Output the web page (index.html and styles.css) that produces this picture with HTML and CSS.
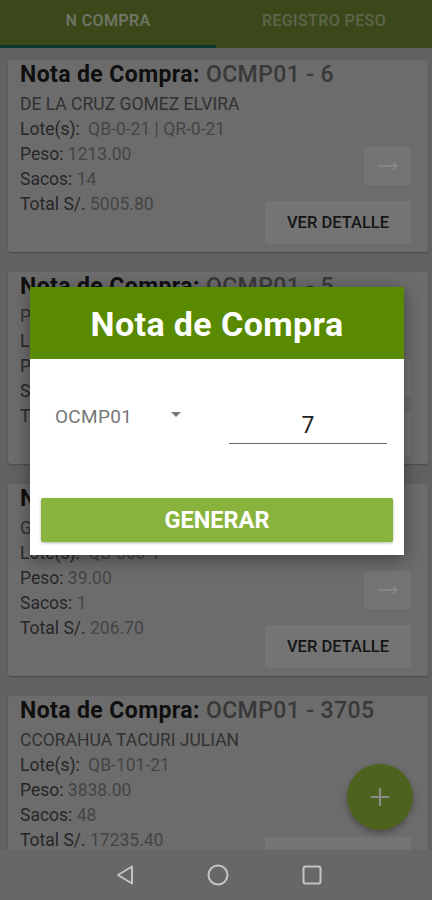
FILE: index.html
```html
<!DOCTYPE html>
<html lang="es">
<head>
<meta charset="UTF-8">
<meta name="viewport" content="width=device-width, initial-scale=1.0">
<title>Nota de Compra</title>
<link rel="stylesheet" href="styles.css">
</head>
<body>
<div class="screen">
    <header class="tabs">
        <div class="tab active">N COMPRA</div>
        <div class="tab">REGISTRO PESO</div>
    </header>

    <main class="list">
        <div class="card">
            <div class="title">Nota de Compra: <span>OCMP01 - 6</span></div>
            <div class="info">
                <div class="name">DE LA CRUZ GOMEZ ELVIRA</div>
                <div class="line">Lote(s): <span class="lots">QB-0-21 | QR-0-21</span></div>
                <div class="line">Peso: <span>1213.00</span></div>
                <div class="line">Sacos: <span>14</span></div>
                <div class="line">Total S/. <span>5005.80</span></div>
            </div>
            <div class="actions">
                <button class="arrow"><svg width="22" height="10" viewBox="0 0 22 10"><path d="M1 5h19M16 1.5 20 5l-4 3.5" fill="none" stroke="#fff" stroke-width="1.4"/></svg></button>
                <button class="detail">VER DETALLE</button>
            </div>
        </div>

        <div class="card">
            <div class="title">Nota de Compra: <span>OCMP01 - 5</span></div>
            <div class="info">
                <div class="name">PALOMINO HUAMAN ROSA</div>
                <div class="line">Lote(s): <span class="lots">QB-2-21</span></div>
                <div class="line">Peso: <span>842.00</span></div>
                <div class="line">Sacos: <span>10</span></div>
                <div class="line">Total S/. <span>3486.30</span></div>
            </div>
            <div class="actions">
                <button class="arrow"><svg width="22" height="10" viewBox="0 0 22 10"><path d="M1 5h19M16 1.5 20 5l-4 3.5" fill="none" stroke="#fff" stroke-width="1.4"/></svg></button>
                <button class="detail">VER DETALLE</button>
            </div>
        </div>

        <div class="card">
            <div class="title">Nota de Compra: <span>OCMP01 - 4</span></div>
            <div class="info">
                <div class="name">GUTIERREZ QUISPE MARIO</div>
                <div class="line">Lote(s): <span class="lots">QB-368-1</span></div>
                <div class="line">Peso: <span>39.00</span></div>
                <div class="line">Sacos: <span>1</span></div>
                <div class="line">Total S/. <span>206.70</span></div>
            </div>
            <div class="actions">
                <button class="arrow"><svg width="22" height="10" viewBox="0 0 22 10"><path d="M1 5h19M16 1.5 20 5l-4 3.5" fill="none" stroke="#fff" stroke-width="1.4"/></svg></button>
                <button class="detail">VER DETALLE</button>
            </div>
        </div>

        <div class="card">
            <div class="title">Nota de Compra: <span>OCMP01 - 3705</span></div>
            <div class="info">
                <div class="name">CCORAHUA TACURI JULIAN</div>
                <div class="line">Lote(s): <span class="lots">QB-101-21</span></div>
                <div class="line">Peso: <span>3838.00</span></div>
                <div class="line">Sacos: <span>48</span></div>
                <div class="line">Total S/. <span>17235.40</span></div>
            </div>
            <div class="actions">
                <button class="arrow"><svg width="22" height="10" viewBox="0 0 22 10"><path d="M1 5h19M16 1.5 20 5l-4 3.5" fill="none" stroke="#fff" stroke-width="1.4"/></svg></button>
                <button class="detail">VER DETALLE</button>
            </div>
        </div>
    </main>

    <button class="fab">
        <svg width="22" height="22" viewBox="0 0 22 22"><path d="M11 2v18M2 11h18" stroke="#fff" stroke-width="2.2" fill="none"/></svg>
    </button>

    <div class="scrim"></div>

    <div class="dialog">
        <div class="dialog-header">Nota de Compra</div>
        <div class="dialog-body">
            <div class="dialog-row">
                <div class="spinner">OCMP01 <span class="caret"></span></div>
                <div class="number">7</div>
            </div>
            <button class="generate">GENERAR</button>
        </div>
    </div>

    <nav class="sysnav">
        <svg width="20" height="22" viewBox="0 0 20 22"><path d="M17 2.5 L3 11 L17 19.5 Z" fill="none" stroke="#c4c4c4" stroke-width="2" stroke-linejoin="round"/></svg>
        <svg width="22" height="22" viewBox="0 0 22 22"><circle cx="11" cy="11" r="9.5" fill="none" stroke="#c4c4c4" stroke-width="2"/></svg>
        <svg width="22" height="22" viewBox="0 0 22 22"><rect x="2.5" y="2.5" width="17" height="17" rx="2" fill="none" stroke="#c4c4c4" stroke-width="2"/></svg>
    </nav>
</div>
</body>
</html>
```

FILE: styles.css
```css
body, html {
    margin: 0;
    padding: 0;
}
body {
    font-family: Roboto, "Noto Sans", sans-serif;
}
.screen {
    position: relative;
    width: 432px;
    height: 900px;
    display: flex;
    flex-direction: column;
    overflow: hidden;
    background-color: #b4b4b4;
}

/* tabs */
.tabs {
    display: flex;
    height: 48px;
    background-color: #6c8530;
}
.tab {
    flex: 1;
    text-align: center;
    font-size: 16px;
    font-weight: 500;
    letter-spacing: 0.4px;
    line-height: 42px;
    color: rgba(255, 255, 255, 0.45);
    box-sizing: border-box;
}
.tab.active {
    color: rgba(255, 255, 255, 0.7);
    border-bottom: 3px solid #126d52;
}

/* list of cards */
.list {
    flex: 1;
    display: flex;
    flex-direction: column;
    gap: 20px;
    padding: 12px 4px 0 8px;
    overflow: hidden;
}
.card {
    flex-shrink: 0;
    height: 192px;
    box-sizing: border-box;
    padding: 1px 17px 8px 12px;
    background-color: #c8c8c8;
    border-radius: 3px;
    box-shadow: 0 1px 2px rgba(0, 0, 0, 0.25);
    display: grid;
    grid-template-columns: 1fr auto;
    grid-template-rows: auto 1fr;
}
.title {
    grid-column: 1 / 3;
    font-size: 23px;
    font-weight: 700;
    letter-spacing: 0.4px;
    line-height: 28px;
    color: #1c1c1c;
    white-space: nowrap;
}
.title span {
    font-weight: 500;
    color: #6a6a6a;
}
.info {
    padding-top: 3px;
    font-size: 17.5px;
    line-height: 25px;
}
.name {
    color: #5c5c5c;
}
.line {
    color: #484848;
}
.line span {
    color: #808080;
}
.line .lots {
    margin-left: 4px;
}
.actions {
    align-self: end;
    display: flex;
    flex-direction: column;
    align-items: flex-end;
    gap: 16px;
}
.actions button {
    border: none;
    border-radius: 2px;
    background-color: #d6d6d6;
    font-family: Roboto, sans-serif;
    padding: 0;
}
.arrow {
    width: 47px;
    height: 38px;
    display: flex;
    align-items: center;
    justify-content: center;
}
.detail {
    width: 146px;
    height: 43px;
    font-size: 16.5px;
    font-weight: 500;
    color: #2a2a2a;
}

/* floating button */
.fab {
    position: absolute;
    left: 347px;
    top: 764px;
    width: 66px;
    height: 66px;
    border-radius: 50%;
    border: none;
    background-color: #8cb536;
    box-shadow: 0 3px 6px rgba(0, 0, 0, 0.3);
    display: flex;
    align-items: center;
    justify-content: center;
    padding: 0;
}

.scrim {
    position: absolute;
    left: 0;
    top: 0;
    width: 100%;
    height: 850px;
    background-color: rgba(0, 0, 0, 0.46);
}

/* dialog */
.dialog {
    position: absolute;
    left: 30px;
    top: 287px;
    width: 374px;
    background-color: #fff;
    box-shadow: 0 4px 16px rgba(0, 0, 0, 0.4);
}
.dialog-header {
    height: 72px;
    background-color: #5a8a00;
    color: #fff;
    font-size: 34px;
    font-weight: 700;
    letter-spacing: 0.4px;
    text-align: center;
    line-height: 74px;
}
.dialog-body {
    height: 196px;
    box-sizing: border-box;
    padding: 41px 11px 13px;
    display: flex;
    flex-direction: column;
}
.dialog-row {
    display: flex;
    align-items: flex-start;
}
.spinner {
    padding-left: 14px;
    height: 34px;
    line-height: 34px;
    font-size: 19px;
    letter-spacing: 0.3px;
    color: #777;
}
.caret {
    display: inline-block;
    margin-left: 34px;
    vertical-align: middle;
    width: 0;
    height: 0;
    border-left: 5px solid transparent;
    border-right: 5px solid transparent;
    border-top: 5px solid #777;
    position: relative;
    top: -3px;
}
.number {
    margin-left: auto;
    margin-right: 6px;
    width: 158px;
    height: 44px;
    box-sizing: border-box;
    padding-top: 11px;
    line-height: 30px;
    text-align: center;
    font-size: 23px;
    color: #222;
    border-bottom: 1.5px solid #666;
}
.generate {
    margin-top: auto;
    height: 44px;
    border: none;
    border-radius: 2px;
    background-color: #88b43e;
    color: #fff;
    font-family: Roboto, sans-serif;
    font-size: 23.5px;
    font-weight: 700;
    box-shadow: 0 1px 3px rgba(0, 0, 0, 0.3);
}

/* system navigation bar */
.sysnav {
    height: 50px;
    flex-shrink: 0;
    background-color: #676767;
    display: flex;
    align-items: center;
    padding-left: 115px;
    gap: 72px;
    position: relative;
}
```
